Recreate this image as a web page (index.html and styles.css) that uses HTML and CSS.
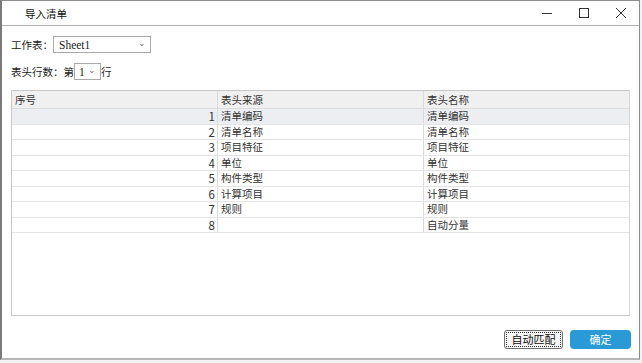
FILE: index.html
```html
<!DOCTYPE html>
<html>
  <head>
    <title>导入清单</title>
    <link rel="stylesheet" href="styles.css">
  </head>
  <body>
    <div class="dialog">
      <div class="titlebar">
        <div class="title">导入清单</div>
        <div class="window-buttons">
          <span class="win-btn">
            <svg width="12" height="12" viewBox="0 0 12 12"><path d="M1 6.5h10" stroke="#333" stroke-width="1"/></svg>
          </span>
          <span class="win-btn">
            <svg width="12" height="12" viewBox="0 0 12 12"><rect x="1.5" y="1.5" width="9" height="9" fill="none" stroke="#333" stroke-width="1"/></svg>
          </span>
          <span class="win-btn">
            <svg width="12" height="12" viewBox="0 0 12 12"><path d="M1 1l10 10M11 1L1 11" stroke="#333" stroke-width="1"/></svg>
          </span>
        </div>
      </div>

      <div class="content">
        <div class="field">
          <label>工作表：</label>
          <div class="select sheet-select">
            <span class="select-value">Sheet1</span>
            <span class="caret">&#8964;</span>
          </div>
        </div>

        <div class="field">
          <label>表头行数：第</label>
          <div class="select row-select">
            <span class="select-value">1</span>
            <span class="caret">&#8964;</span>
          </div>
          <label>行</label>
        </div>

        <div class="grid">
          <div class="grid-row grid-head">
            <div class="cell col-no">序号</div>
            <div class="cell col-src">表头来源</div>
            <div class="cell col-name">表头名称</div>
          </div>
          <div class="grid-row selected">
            <div class="cell col-no num">1</div>
            <div class="cell col-src">清单编码</div>
            <div class="cell col-name">清单编码</div>
          </div>
          <div class="grid-row">
            <div class="cell col-no num">2</div>
            <div class="cell col-src">清单名称</div>
            <div class="cell col-name">清单名称</div>
          </div>
          <div class="grid-row">
            <div class="cell col-no num">3</div>
            <div class="cell col-src">项目特征</div>
            <div class="cell col-name">项目特征</div>
          </div>
          <div class="grid-row">
            <div class="cell col-no num">4</div>
            <div class="cell col-src">单位</div>
            <div class="cell col-name">单位</div>
          </div>
          <div class="grid-row">
            <div class="cell col-no num">5</div>
            <div class="cell col-src">构件类型</div>
            <div class="cell col-name">构件类型</div>
          </div>
          <div class="grid-row">
            <div class="cell col-no num">6</div>
            <div class="cell col-src">计算项目</div>
            <div class="cell col-name">计算项目</div>
          </div>
          <div class="grid-row">
            <div class="cell col-no num">7</div>
            <div class="cell col-src">规则</div>
            <div class="cell col-name">规则</div>
          </div>
          <div class="grid-row">
            <div class="cell col-no num">8</div>
            <div class="cell col-src"></div>
            <div class="cell col-name">自动分量</div>
          </div>
        </div>

        <div class="actions">
          <div class="btn btn-plain">自动匹配</div>
          <div class="btn btn-primary">确定</div>
        </div>
      </div>
    </div>
  </body>
</html>
```

FILE: styles.css
```css
html, body {
  margin: 0;
  padding: 0;
  background: #f3f3f3;
}

body {
  width: 642px;
  height: 363px;
  overflow: hidden;
  font-family: "Noto Sans CJK SC", "Liberation Sans", sans-serif;
  font-size: 10.5px;
  color: #333;
}

.dialog {
  width: 637px;
  height: 357px;
  background: #fff;
  border: 1px solid #8c8c8c;
  border-left: 2px solid #7a7a7a;
  border-bottom: 2px solid #b5b5b5;
  display: flex;
  flex-direction: column;
}

.titlebar {
  height: 24px;
  border-bottom: 1px solid #b0b0b0;
  display: flex;
  align-items: center;
  justify-content: space-between;
}

.title {
  padding-left: 23px;
  font-size: 10.5px;
  color: #111;
}

.window-buttons {
  display: flex;
}

.win-btn {
  width: 37px;
  height: 24px;
  display: flex;
  align-items: center;
  justify-content: center;
}

.content {
  flex: 1;
  display: flex;
  flex-direction: column;
  padding: 10px 6px 0 9px;
}

.field {
  display: flex;
  align-items: center;
  height: 17px;
  margin-bottom: 10px;
  color: #222;
}

.field label {
  white-space: nowrap;
}

.select {
  height: 15px;
  border: 1px solid #a9a9a9;
  background: #fff;
  display: flex;
  align-items: center;
  justify-content: space-between;
  padding: 0 4px 0 5px;
}

.sheet-select {
  width: 87px;
}

.row-select {
  width: 17px;
  padding-left: 4px;
}

.select-value {
  font-family: "Liberation Serif", "DejaVu Serif", serif;
  font-size: 11.5px;
}

.caret {
  font-size: 9px;
  color: #666;
  line-height: 8px;
  margin-top: -4px;
}

.grid {
  height: 226px;
  width: 619px;
  border: 1px solid #c8c8c8;
  border-right-color: #d6d6d6;
  box-sizing: border-box;
}

.grid-row {
  display: flex;
  height: 15.5px;
  border-bottom: 1px solid #e4e4e4;
  box-sizing: border-box;
}

.grid-head {
  height: 18px;
  background: #f0f0f0;
  border-bottom: 1px solid #dcdcdc;
}

.grid-row.selected {
  background: #eceef1;
}

.cell {
  line-height: 14px;
  padding: 0 2px 0 3px;
  white-space: nowrap;
  color: #333;
}

.grid-head .cell {
  line-height: 17px;
}

.num {
  text-align: right;
  font-size: 11.5px;
}

.col-no {
  width: 206px;
  box-sizing: border-box;
  border-right: 1px solid #dadada;
}

.col-src {
  width: 206px;
  box-sizing: border-box;
  border-right: 1px solid #dadada;
}

.col-name {
  flex: 1;
}

.actions {
  display: flex;
  justify-content: flex-end;
  gap: 7px;
  margin-top: 14px;
  padding-right: 2px;
}

.btn {
  height: 17px;
  line-height: 17px;
  text-align: center;
  border-radius: 3px;
  font-size: 11px;
}

.btn-plain {
  width: 57px;
  border: 1px solid #707070;
  background: #f5f5f5;
  outline: 1px dotted #333;
  outline-offset: -3px;
  color: #111;
}

.btn-primary {
  width: 61px;
  height: 19px;
  line-height: 19px;
  background: #2a9ad6;
  color: #fff;
  border-radius: 4px;
}
```
